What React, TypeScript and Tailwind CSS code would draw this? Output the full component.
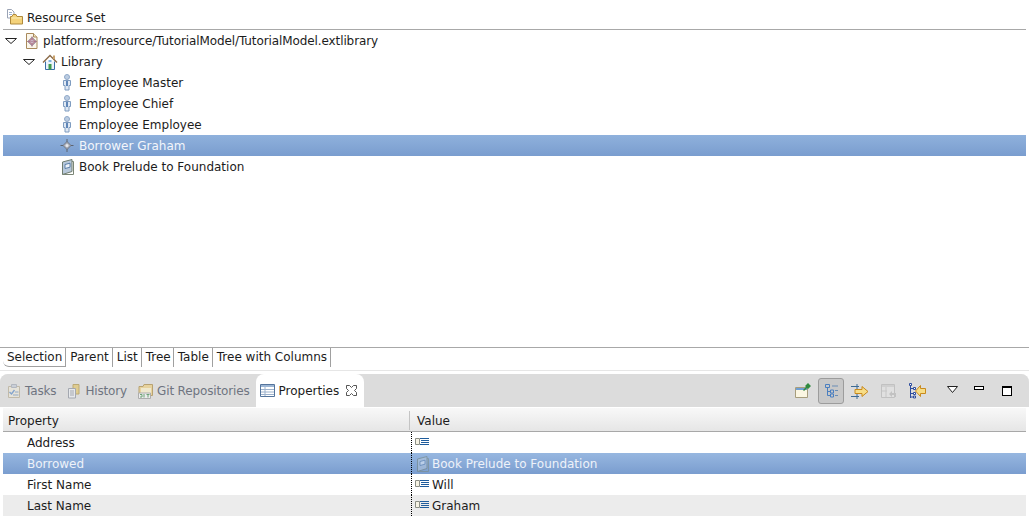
import type { ReactNode } from "react";

const FONT = "font-['DejaVu_Sans',sans-serif]";

// --- small icons, all drawn on a 16x16 grid ---

function Twistie() {
  return (
    <svg width="12" height="7" viewBox="0 0 12 7" className="shrink-0">
      <path d="M.5 1.500H11.500L6 6.500Z" fill="#fff" stroke="#222" strokeWidth="1" />
    </svg>
  );
}

function ResourceSetIcon() {
  return (
    <svg width="16" height="16" viewBox="0 0 16 16" className="shrink-0">
      <path d="M.5 .5h4l2.500 2.500v6h-6.500z" fill="#fff" stroke="#9aa3b5" />
      <path d="M2 3.500h3M2 5.500h3" stroke="#9fb2d0" />
      <path d="M3.500 7.500h1.500l1-2h3l1 2h5.500v7.500h-12z" fill="#f4d27a" stroke="#b08a3c" />
      <path d="M4.500 8.500h10v1h-10z" fill="#fbeeb8" />
    </svg>
  );
}

function ModelFileIcon() {
  return (
    <svg width="16" height="16" viewBox="0 0 16 16" className="shrink-0">
      <path d="M2.500 .5h7l3.500 3.500v11.500h-10.500z" fill="#fbf6ea" stroke="#a98a5c" />
      <path d="M9.500 .5v3.500h3.500" fill="#efe0c0" stroke="#a98a5c" />
      <path d="M8 4l4.500 4.500-4.500 4.500-4.500-4.500z" fill="#b98a9a" stroke="#8a8fa0" strokeWidth=".6" />
      <path d="M8 6.500l2 2-2 2-2-2z" fill="#dcdce8" />
      <path d="M8 3v11M3 8.500h10" stroke="#a0607a" strokeWidth=".5" />
    </svg>
  );
}

function HouseIcon() {
  return (
    <svg width="16" height="16" viewBox="0 0 16 16" className="shrink-0">
      <path d="M3.500 7.500v8h9v-8" fill="#eaf2fb" stroke="#3a6ea8" />
      <path d="M1 8.500L8 1.500l7 7" fill="none" stroke="#8a6a48" strokeWidth="1.400" />
      <path d="M6.500 10h3v5.500h-3z" fill="#3d9a4e" />
      <path d="M11 1.500h2v3.500h-2z" fill="#c9a36e" />
      <path d="M6.500 6h3v2h-3z" fill="#7fb2e0" />
    </svg>
  );
}

function PersonIcon() {
  return (
    <svg width="16" height="17" viewBox="0 0 16 17" className="shrink-0">
      <circle cx="7" cy="3" r="2.500" fill="#bccde2" stroke="#8fa8c8" />
      <path d="M3.500 6.500h7v5h-1.500v4.500h-4v-4.500h-1.500z" fill="#dfe8f3" stroke="#7f9cc0" />
      <path d="M6 7h2v5h-2z" fill="#5f86b8" />
    </svg>
  );
}

function BorrowerIcon() {
  return (
    <svg width="16" height="16" viewBox="0 0 16 16" className="shrink-0">
      <path d="M7 1v13M.5 7.500h13" stroke="#5d6470" strokeWidth="1" />
      <path d="M7 3.500l4 4-4 4-4-4z" fill="#a9adb8" stroke="#5d6470" strokeWidth=".7" />
      <circle cx="7" cy="7.500" r="1.500" fill="#e6e8ee" />
    </svg>
  );
}

function BookIcon({ dim = false }: { dim?: boolean }) {
  return (
    <svg width="16" height="16" viewBox="0 0 16 16" className={`shrink-0 ${dim ? "opacity-50" : ""}`}>
      <path d="M2.500 3L12 .5v12L2.500 15.500z" fill="#b8c8da" stroke="#6f7d70" />
      <path d="M12 2.500h1.500v13H2.500" fill="none" stroke="#7b8676" />
      <path d="M5 5.500l5-1.300v4l-5 1.300z" fill="#eef3f8" stroke="#3f6a9c" strokeWidth=".8" />
    </svg>
  );
}

function PropertyValueIcon() {
  return (
    <svg width="14" height="11" viewBox="0 0 14 11" className="shrink-0">
      <path d="M.5 1.500h4v6h-4z" fill="#f7f3e4" stroke="#8c8f86" />
      <path d="M5 1.500h9M6 3.500h8M6 5.500h8M5 7.500h9" stroke="#1f5c9c" />
    </svg>
  );
}

function TasksIcon() {
  return (
    <svg width="16" height="16" viewBox="0 0 16 16" className="shrink-0 opacity-50">
      <path d="M2.500 3.500h11v11h-11z" fill="#f1ead8" stroke="#a89a78" />
      <path d="M5.500 1.500h5v3h-5z" fill="#b9c4d4" stroke="#8a94a5" />
      <path d="M3.500 9l2 2 3-4" fill="none" stroke="#2f6fc0" strokeWidth="1.400" />
      <path d="M9 9h3.500M7 12h5.500" stroke="#4a78b0" />
    </svg>
  );
}

function HistoryIcon() {
  return (
    <svg width="16" height="16" viewBox="0 0 16 16" className="shrink-0 opacity-60">
      <path d="M7 1.500h6v9.500h-6z" fill="#e2c25e" stroke="#a88a30" />
      <path d="M2.500 5.500h7v9.500h-7z" fill="#eef1f5" stroke="#7f8794" />
      <path d="M4 8h4M4 10h4M4 12h4" stroke="#7f8794" />
    </svg>
  );
}

function GitIcon() {
  return (
    <svg width="16" height="16" viewBox="0 0 16 16" className="shrink-0 opacity-70">
      <path d="M1 3.500h4l1-2h8.500v11h-13.500z" fill="#eccf83" stroke="#a98a44" />
      <path d="M3 5h10v5h-10z" fill="#f8eec8" />
      <path d="M.5 10h12v5.500h-12z" fill="#f4f4f4" stroke="#9a9a9a" />
      <path d="M2 11.500h2v2.500h-2M6 11v3.500M8.500 11.500h3M10 11.500v3" fill="none" stroke="#3f8a4a" />
    </svg>
  );
}

function PropertiesIcon() {
  return (
    <svg width="16" height="16" viewBox="0 0 16 16" className="shrink-0">
      <path d="M.5 1.500h14v12h-14z" fill="#fff" stroke="#54749c" />
      <path d="M1 2h13v2h-13z" fill="#9db6d4" />
      <path d="M1 6.500h13M1 9h13M1 11.500h13M5 4v9" stroke="#9db2cc" />
    </svg>
  );
}

function CloseIcon() {
  return (
    <svg width="11" height="11" viewBox="0 0 11 11" className="shrink-0 ml-[7px]">
      <path
        d="M.5 .5h3l2 2 2-2h3v3l-2 2 2 2v3h-3l-2-2-2 2h-3v-3l2-2-2-2z"
        fill="#fff"
        stroke="#444"
        strokeWidth=".9"
      />
    </svg>
  );
}

function PinIcon() {
  return (
    <svg width="16" height="16" viewBox="0 0 16 16" className="shrink-0">
      <path d="M.5 4.500h12v10h-12z" fill="#fbf6e2" stroke="#a79d7c" />
      <path d="M1 5h11v2h-11z" fill="#6f9fd4" />
      <path d="M8 7l3-3-1-1 3-3 3 3-3 3-1-1-3 3z" fill="#2f8a3f" />
    </svg>
  );
}

function CategoriesIcon() {
  return (
    <svg width="16" height="16" viewBox="0 0 16 16">
      <path d="M2.500 1.500h4v3h-4z" fill="none" stroke="#4a7fc0" />
      <path d="M4.500 4.500v8h2.500M4.500 8.500h2.500" fill="none" stroke="#4a7fc0" />
      <path d="M9 3h6M12 7.500h3M12 12.500h3" stroke="#6a8db5" />
      <path d="M7.500 7h3v3h-3zM7.500 11h3v3h-3z" fill="none" stroke="#4a7fc0" />
    </svg>
  );
}

function FilterArrowIcon() {
  return (
    <svg width="18" height="16" viewBox="0 0 18 16" className="shrink-0">
      <path d="M0 3.500h8M0 13.500h8" stroke="#3c6a94" />
      <path d="M6 1v5M6 11v5" stroke="#3c6a94" />
      <path d="M4 6.500h7v-3l6 5-6 5v-3h-7z" fill="#f7dd87" stroke="#c98a1c" />
    </svg>
  );
}

function RestoreDefaultIcon() {
  return (
    <svg width="16" height="16" viewBox="0 0 16 16" className="shrink-0 opacity-40">
      <path d="M.5 1.500h13v13h-13z" fill="#e6e6e6" stroke="#9a9a9a" />
      <path d="M1 2h12v2h-12z" fill="#bdbdbd" />
      <path d="M5 4v10M1 8h5" stroke="#aaa" />
      <path d="M8 11l3-3v2h4v4h-2v-2h-2v2z" fill="#9d9d9d" />
    </svg>
  );
}

function CollapseIcon() {
  return (
    <svg width="17" height="16" viewBox="0 0 17 16" className="shrink-0">
      <path d="M1.500 1v14" stroke="#2d4c9c" />
      <path d="M.5 .5h2v2h-2zM4.500 4.500h2v2h-2zM4.500 9.500h2v2h-2zM4.500 13h2v2h-2z" fill="#fff" stroke="#2d4c9c" />
      <path d="M2 5.500h2M2 10.500h2M2 14h2" stroke="#2d4c9c" />
      <path d="M16.500 5.500h-5v-3l-5 5.500 5 5.500v-3h5z" fill="#f7dd87" stroke="#c98a1c" />
    </svg>
  );
}

function ViewMenuIcon() {
  return (
    <svg width="11" height="7" viewBox="0 0 11 7" className="shrink-0 self-start mt-[12px]">
      <path d="M.5 .5h10l-5 6z" fill="#fff" stroke="#222" />
    </svg>
  );
}

// --- pieces of the window ---

function TreeRow({
  indent,
  twistie,
  icon,
  label,
  selected,
  labelClass = "",
}: {
  indent: string;
  twistie?: boolean;
  icon: ReactNode;
  label: string;
  selected?: boolean;
  labelClass?: string;
}) {
  return (
    <div
      className={`flex items-center h-[21px] ${indent} ${
        selected ? "bg-gradient-to-b from-[#8fb1dc] to-[#7a9dcf] text-[#f3f6fb]" : "text-[#1c1c1c]"
      }`}
    >
      {twistie && <Twistie />}
      <span className={twistie ? "ml-[7px]" : ""}>{icon}</span>
      <span className={`ml-[3px] pt-px whitespace-nowrap ${labelClass}`}>{label}</span>
    </div>
  );
}

function EditorTab({ label, active, tight }: { label: string; active?: boolean; tight?: boolean }) {
  return (
    <div
      className={`h-[19px] pl-[4px] ${tight ? "pr-[2px]" : "pr-[3px]"} flex items-center border-r border-[#a0a0a0] ${
        active ? "pb-[1px] rounded-bl-[6px] border-b border-b-[#a0a0a0]" : "pb-[2px]"
      }`}
    >
      {label}
    </div>
  );
}

function ViewTab({ icon, label }: { icon: ReactNode; label: string }) {
  return (
    <div className="flex items-center gap-[3px] text-[#6f7480]">
      {icon}
      <span className="whitespace-nowrap tracking-[-0.15px] pt-px">{label}</span>
    </div>
  );
}

function PropertyRow({
  name,
  value,
  selected,
  shaded,
}: {
  name: string;
  value?: string;
  selected?: boolean;
  shaded?: boolean;
}) {
  const rowColor = selected
    ? "bg-gradient-to-b from-[#97b7e0] to-[#7a9dcf] text-[#eef2f9]"
    : shaded
      ? "bg-[#ececec] text-[#1c1c1c]"
      : "text-[#1c1c1c]";
  return (
    <div className={`flex h-[21px] shrink-0 items-center ${rowColor}`}>
      <div className="w-[408px] pl-[24px] pt-px whitespace-nowrap">{name}</div>
      <div className="w-px self-stretch border-l border-dotted border-black" />
      <div className="flex items-center pl-[3px] whitespace-nowrap">
        <div className="w-[17px]">{selected ? <BookIcon dim /> : <PropertyValueIcon />}</div>
        {value && <span className="pt-px">{value}</span>}
      </div>
    </div>
  );
}

export default function App() {
  return (
    <div className={`${FONT} w-[1029px] h-[519px] overflow-hidden bg-white text-[12px] flex flex-col`}>
      {/* Header */}
      <div className="h-[29px] pl-[7px] pt-[8px] flex items-start shrink-0">
        <div className="pt-px">
          <ResourceSetIcon />
        </div>
        <span className="ml-[4px] text-[#1c1c1c] leading-[21px]">Resource Set</span>
      </div>
      <div className="h-px bg-[#a8a8a8] shrink-0 mx-[3px]" />

      {/* Tree */}
      <div className="flex-1 px-[3px]">
        <TreeRow
          indent="pl-[2px]"
          twistie
          icon={<ModelFileIcon />}
          label="platform:/resource/TutorialModel/TutorialModel.extlibrary"
          labelClass="tracking-[-0.1px]"
        />
        <TreeRow indent="pl-[20px]" twistie icon={<HouseIcon />} label="Library" />
        <TreeRow indent="pl-[57px]" icon={<PersonIcon />} label="Employee Master" />
        <TreeRow indent="pl-[57px]" icon={<PersonIcon />} label="Employee Chief" />
        <TreeRow indent="pl-[57px]" icon={<PersonIcon />} label="Employee Employee" />
        <TreeRow indent="pl-[57px]" selected icon={<BorrowerIcon />} label="Borrower Graham" />
        <TreeRow indent="pl-[57px]" icon={<BookIcon />} label="Book Prelude to Foundation" />
      </div>

      {/* Editor page tabs */}
      <div className="h-[24px] shrink-0 border-t border-b border-t-[#a8a8a8] border-b-[#e6e6e6] flex items-start pl-[3px] text-[#1c1c1c]">
        <EditorTab label="Selection" active />
        <EditorTab label="Parent" />
        <EditorTab label="List" />
        <EditorTab label="Tree" tight />
        <EditorTab label="Table" />
        <EditorTab label="Tree with Columns" />
      </div>

      {/* Properties view */}
      <div className="h-[145px] mt-[3px] shrink-0 bg-[#eeeeee] rounded-t-[8px] flex flex-col">
        <div className="h-[33px] shrink-0 rounded-t-[8px] bg-[#dcdcdc] flex items-stretch pl-[6px]">
          <div className="flex items-center">
            <ViewTab icon={<TasksIcon />} label="Tasks" />
            <div className="ml-[10px]">
              <ViewTab icon={<HistoryIcon />} label="History" />
            </div>
            <div className="ml-[11px]">
              <ViewTab icon={<GitIcon />} label="Git Repositories" />
            </div>
          </div>
          <div className="ml-[6px] w-[108px] rounded-t-[8px] bg-white flex items-center pl-[4px] text-[#1c1c1c]">
            <PropertiesIcon />
            <span className="ml-[3px] pt-px">Properties</span>
            <CloseIcon />
          </div>
          <div className="flex-1 flex items-center justify-end pr-[17px]">
            <div className="flex items-center gap-[12px] mr-[21px]">
              <PinIcon />
              <div className="w-[26px] h-[26px] -mx-[5px] flex items-center justify-center rounded-[3px] bg-[#c8c8c8] border border-[#9c9c9c]">
                <CategoriesIcon />
              </div>
              <FilterArrowIcon />
              <RestoreDefaultIcon />
              <CollapseIcon />
            </div>
            <ViewMenuIcon />
            <div className="self-start mt-[12px] ml-[16px] w-[10px] h-[4px] border border-black bg-white" />
            <div className="self-start mt-[12px] ml-[18px] w-[10px] h-[10px] border border-black border-t-2 bg-white" />
          </div>
        </div>
        <div className="flex-1 bg-white pt-[1px] px-[3px] flex flex-col min-h-0">
          <div className="flex h-[24px] shrink-0 items-center pt-[2px] border-b border-[#a8a8a8] bg-gradient-to-b from-[#f8f8f8] to-[#e6e6e6] text-[#1c1c1c]">
            <div className="w-[407px] pl-[5px] border-r border-[#c4c4c4] h-[19px] flex items-center">Property</div>
            <div className="pl-[7px]">Value</div>
          </div>
          <PropertyRow name="Address" />
          <PropertyRow name="Borrowed" value="Book Prelude to Foundation" selected />
          <PropertyRow name="First Name" value="Will" />
          <PropertyRow name="Last Name" value="Graham" shaded />
        </div>
      </div>
    </div>
  );
}
